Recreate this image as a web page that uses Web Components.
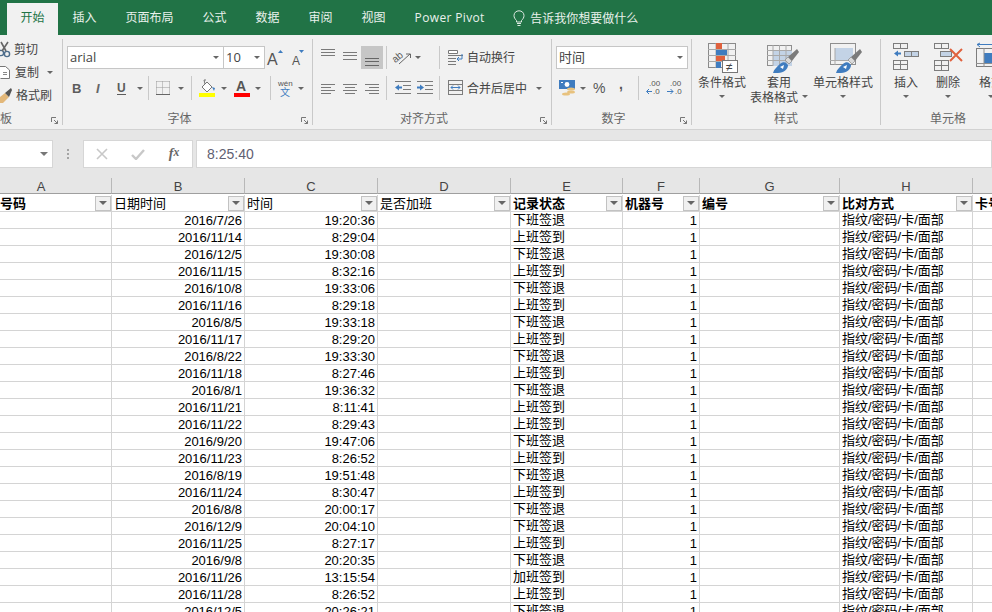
<!DOCTYPE html>
<html>
<head>
<meta charset="utf-8">
<style>
  html, body { margin: 0; padding: 0; width: 992px; height: 612px; overflow: hidden; background: #e6e6e6; }
  body { font: 12px "Liberation Sans", "Noto Sans CJK SC", sans-serif; display: flex; flex-direction: column; }
</style>
</head>
<body>
<xl-tabs></xl-tabs>
<xl-ribbon>
  <xl-group w="63" pt="0" launcher label="板" left>
    <xl-row h="23" top="-1"><xl-tool w="62" text="剪切" icon="cut"></xl-tool></xl-row>
    <xl-row h="23"><xl-tool w="46" text="复制" icon="copy"></xl-tool><xl-caret w="8" ></xl-caret></xl-row>
    <xl-row h="23"><xl-tool w="62" text="格式刷" icon="brush"></xl-tool></xl-row>
  </xl-group>

  <xl-group w="250" launcher label="字体">
    <xl-row pad="4" h="23">
      <xl-combo w="157" value="arial"></xl-combo>
      <xl-combo w="42" value="10"></xl-combo>
      <xl-tool w="22" icon="growfont"></xl-tool>
      <xl-tool w="22" icon="shrinkfont"></xl-tool>
    </xl-row>
    <xl-row pad="3" h="24" top="7">
      <xl-tool w="22" icon="bold"></xl-tool>
      <xl-tool w="22" icon="italic"></xl-tool>
      <xl-tool w="24" icon="underline"></xl-tool>
      <xl-caret w="12"></xl-caret>
      <xl-sep w="6"></xl-sep>
      <xl-tool w="22" icon="borders"></xl-tool>
      <xl-caret w="14"></xl-caret>
      <xl-sep w="8"></xl-sep>
      <xl-tool w="22" icon="fill"></xl-tool>
      <xl-caret w="12"></xl-caret>
      <xl-tool w="23" icon="fontcolor"></xl-tool>
      <xl-caret w="10"></xl-caret>
      <xl-sep w="12"></xl-sep>
      <xl-tool w="20" icon="pinyin"></xl-tool>
      <xl-caret w="12"></xl-caret>
    </xl-row>
  </xl-group>

  <xl-group w="239" launcher label="对齐方式">
    <xl-row pad="4" h="23">
      <xl-tool w="22" icon="atop"></xl-tool>
      <xl-tool w="22" icon="amiddle"></xl-tool>
      <xl-tool w="22" icon="abottom" on></xl-tool>
      <xl-sep w="8"></xl-sep>
      <xl-tool w="23" icon="orient"></xl-tool>
      <xl-caret w="7"></xl-caret>
      <xl-sep w="23"></xl-sep>
      <xl-tool pad icon="wrap" text="自动换行"></xl-tool>
    </xl-row>
    <xl-row pad="4" h="24" top="7">
      <xl-tool w="22" icon="aleft"></xl-tool>
      <xl-tool w="22" icon="acenter"></xl-tool>
      <xl-tool w="22" icon="aright"></xl-tool>
      <xl-sep w="8"></xl-sep>
      <xl-tool w="23" icon="outdent"></xl-tool>
      <xl-tool w="22" icon="indent"></xl-tool>
      <xl-sep w="8"></xl-sep>
      <xl-tool pad icon="merge" text="合并后居中"></xl-tool>
      <xl-caret w="24"></xl-caret>
    </xl-row>
  </xl-group>

  <xl-group w="140" launcher label="数字">
    <xl-row pad="4" h="23"><xl-combo w="132" value="时间"></xl-combo></xl-row>
    <xl-row pad="4" h="24" top="7">
      <xl-tool w="22" icon="money"></xl-tool>
      <xl-caret w="10"></xl-caret>
      <xl-tool w="24" icon="percent"></xl-tool>
      <xl-tool w="20" icon="comma"></xl-tool>
      <xl-sep w="11"></xl-sep>
      <xl-tool w="21" icon="decinc"></xl-tool>
      <xl-tool w="22" icon="decdec"></xl-tool>
    </xl-row>
  </xl-group>

  <xl-group w="189" label="样式" pt="4">
    <xl-row pad="5" big>
      <xl-bigtool w="50" icon="cond" lines="条件格式"></xl-bigtool>
      <xl-bigtool w="64" icon="table" lines="套用|表格格式" inlinecaret></xl-bigtool>
      <xl-bigtool w="64" icon="cellstyle" lines="单元格样式"></xl-bigtool>
    </xl-row>
  </xl-group>

  <xl-group w="134" label="单元格" pt="4" last>
    <xl-row pad="4" big>
      <xl-bigtool w="42" icon="insert" lines="插入"></xl-bigtool>
      <xl-bigtool w="42" icon="delete" lines="删除"></xl-bigtool>
      <xl-bigtool w="44" icon="format" lines="格式"></xl-bigtool>
    </xl-row>
  </xl-group>
</xl-ribbon>
<xl-formula value="8:25:40"></xl-formula>
<xl-sheet></xl-sheet>

<script>
// every icon is drawn 1:1, so viewBox units are screen pixels
const G = "#6f6f6f", B = "#3f7cbf", LB = "#c3d3e6";
const hl = (x, y, w, c = "#7a7a7a") => `<rect x="${x}" y="${y}" width="${w}" height="1" fill="${c}"/>`;
const box = (x, y, w, h, c = "#7d7d7d", f = "none") => `<rect x="${x + .5}" y="${y + .5}" width="${w - 1}" height="${h - 1}" fill="${f}" stroke="${c}"/>`;
const txt = (x, y, s, t, extra = "") => `<text x="${x}" y="${y}" font-size="${s}" font-family="Liberation Sans, Noto Sans CJK SC, sans-serif" ${extra}>${t}</text>`;
const brushTail = `
  <path d="M21 14 L30 6 L32 9 L25 18 Z" fill="#7b7b7b"/><path d="M18 17 L21 14 L25 18 L22 21 Z" fill="#d9d9d9" stroke="#7b7b7b" stroke-width=".6"/>
  <path d="M6 30 C7 26 10 24 13 21 C15 19 18 19 19 20 L21 22 C21 26 17 30 11 30 Z" fill="${B}"/><path d="M13 24 L17 22 L16 26 Z" fill="#fff"/>`;

const ICONS = {
  cut: [10, 15, `<circle cx="1" cy="11" r="2.6" fill="none" stroke="#4d6d8c" stroke-width="1.4"/><circle cx="7" cy="12" r="2.6" fill="none" stroke="#4d6d8c" stroke-width="1.4"/><path d="M1 0 L6 9 M8 0 L2 9" stroke="#666" stroke-width="1.6"/>`],
  copy: [11, 15, `<path d="M-2 1.5 H5.5 L9.5 5 V13.5 H0.5" fill="#fff" stroke="#777"/><path d="M3 7.5H7 M3 9.5H7" stroke="#888"/>`],
  brush: [12, 15, `<path d="M0 9 L5 5 L9 9 L3 15 H0 Z" fill="#e3b87a"/><path d="M5 5 L11 0 L12 2 L9 9 Z" fill="#555"/>`],
  growfont: [18, 16, txt(1, 15, 16, "A", `fill="#555"`) + `<path d="M12 3 L14.5 0 L17 3 Z" fill="${B}"/>`],
  shrinkfont: [18, 16, txt(4, 15, 12, "A", `fill="#555"`) + `<path d="M11 0 H16 L13.5 3 Z" fill="${B}"/>`],
  bold: [12, 16, txt(1, 13, 13, "B", `fill="#5c5c5c" font-weight="bold"`)],
  italic: [12, 16, txt(3, 13, 13, "I", `fill="#666" font-style="italic" font-family="Liberation Serif, serif" font-weight="bold"`)],
  underline: [12, 16, txt(1, 12, 12, "U", `fill="#5c5c5c" font-weight="bold"`) + hl(1, 14, 9, "#5c5c5c")],
  borders: [14, 14, `<path d="M.5 .5H13.5M.5 6.5H13.5M.5 .5V13.5M6.5 .5V13.5M13.5 .5V13.5" stroke="#999" stroke-dasharray="1 1" fill="none"/>` + hl(0, 13, 14, "#666")],
  fill: [17, 18, `<path d="M3 8 L8 3 L13 8 L8 13 Z" fill="#fff" stroke="#777"/><path d="M6 5 L5 1 H7" stroke="#777" fill="none"/><path d="M13 8 L16 9 L15 12 Z" fill="${B}"/><rect y="14" x="0" width="16" height="4" fill="#ffff00"/>`],
  fontcolor: [16, 18, txt(2, 12, 14, "A", `fill="#555" font-weight="bold"`) + `<rect x="0" y="14" width="16" height="4" fill="#ff0000"/>`],
  pinyin: [14, 18, txt(0, 7, 8, "wén", `fill="#555"`) + txt(2, 17, 10, "文", `fill="${B}"`)],
  atop: [14, 15, hl(0, -1, 14) + hl(0, 2, 14) + hl(0, 5, 14)],
  amiddle: [14, 15, hl(0, 2, 14) + hl(0, 5, 14) + hl(0, 9, 14)],
  abottom: [14, 15, hl(0, 8, 14, "#666") + hl(0, 11, 14, "#666") + hl(0, 15, 14, "#666")],
  aleft: [14, 14, hl(0, 3, 14) + hl(0, 6, 10) + hl(0, 9, 14) + hl(0, 12, 10)],
  acenter: [14, 14, hl(0, 3, 14) + hl(2, 6, 10) + hl(0, 9, 14) + hl(2, 12, 10)],
  aright: [14, 14, hl(0, 3, 14) + hl(4, 6, 10) + hl(0, 9, 14) + hl(4, 12, 10)],
  orient: [17, 15, txt(0, 10, 10, "ab", `fill="#555" transform="rotate(-40 5 10)"`) + `<path d="M5 14 L16 4 M12 4 H16.5 V8" stroke="#666" fill="none"/>`],
  wrap: [15, 15, `<path d="M.5 .5H9.5V3.5H.5Z" fill="#fff" stroke="#777"/>` + hl(0, 5, 15) + hl(0, 8, 8) + hl(0, 11, 8) + hl(0, 14, 8) + `<path d="M14 4 V9 H9 M11 7 L9 9 L11 11" stroke="${B}" fill="none"/>`],
  merge: [15, 16, box(0, 0, 15, 15) + hl(0, 4, 15) + hl(0, 10, 15) + `<path d="M3 7.5H12 M5 5.5L3 7.5L5 9.5 M10 5.5L12 7.5L10 9.5" stroke="${B}" fill="none"/>`],
  outdent: [16, 14, hl(0, 0, 16) + hl(8, 4, 8) + hl(8, 8, 8) + hl(0, 12, 16) + `<path d="M0 6.5 L4 3.5 V5.5 H7 V7.5 H4 V9.5 Z" fill="${B}"/>`],
  indent: [16, 14, hl(0, 0, 16) + hl(8, 4, 8) + hl(8, 8, 8) + hl(0, 12, 16) + `<path d="M7 6.5 L3 3.5 V5.5 H0 V7.5 H3 V9.5 Z" fill="${B}"/>`],
  money: [17, 16, `<rect x="0" y="0" width="16" height="9" fill="${B}"/><circle cx="8" cy="4.5" r="2.4" fill="#fff"/><rect x="2" y="2" width="2" height="1" fill="#fff"/><ellipse cx="12" cy="9" rx="4" ry="1.6" fill="#e8c27e"/><ellipse cx="12" cy="12" rx="4" ry="1.6" fill="#e8c27e"/><ellipse cx="7" cy="14" rx="4" ry="1.6" fill="#e8c27e"/>`],
  percent: [14, 16, txt(0, 13, 14, "%", `fill="#555"`)],
  comma: [8, 16, txt(1, 9, 14, ",", `fill="#555" font-weight="bold"`)],
  decinc: [16, 16, `<path d="M0 12.5H5 M3 10L5.5 12.5L3 15" stroke="${B}" fill="none" transform="translate(0 -1) scale(-1 1) translate(-6 0)"/>` + txt(7, 14, 8, ".0", `fill="#555"`) + txt(3, 6, 8, ".00", `fill="#555"`)],
  decdec: [16, 16, `<path d="M0 12.5H6 M3.5 10L6 12.5L3.5 15" stroke="${B}" fill="none" transform="translate(0 -1)"/>` + txt(8, 14, 8, ".0", `fill="#555"`) + txt(3, 6, 8, ".00", `fill="#555"`)],
  cond: [28, 30, box(0, 0, 28, 25, "#8a8a8a") + `<path d="M8 0V25 M20 0V25 M0 6.5H28 M0 12.5H28 M0 18.5H28" stroke="#a8a8a8"/>
    <rect x="8" y="0" width="6" height="6" fill="#e0613d"/><rect x="8" y="7" width="11" height="5" fill="${B}"/><rect x="8" y="13" width="9" height="5" fill="#e0613d"/><rect x="8" y="19" width="5" height="6" fill="${B}"/>
    <rect x="14.5" y="17.5" width="15" height="12" fill="#fff" stroke="#777"/>` + txt(18, 28, 12, "≠", `fill="#444"`)],
  table: [24, 30, box(0, 2, 25, 21, "#8f8f8f") + `<rect x="6" y="7" width="19" height="16" fill="${LB}"/><path d="M6 2V23 M12.5 2V23 M19 2V23 M0 7.5H25 M0 12.5H25 M0 17.5H25" stroke="#a9a9a9"/>` + brushTail],
  cellstyle: [26, 30, box(0, 0, 26, 22, "#8f8f8f") + `<rect x="5" y="5" width="18" height="12" fill="${LB}"/><path d="M0 17.5H23 M5 5V22" stroke="#a9a9a9"/>` + brushTail],
  insert: [26, 27, box(0, 0, 15, 6) + `<path d="M7.5 0V6" stroke="#7d7d7d"/>` + `<path d="M1 10.5 L5 7.5 V9.5 H8 V11.5 H5 V13.5 Z" fill="${B}"/>` + box(11, 8, 15, 6, "#7d7d7d", LB) + `<path d="M18.5 8V14" stroke="#7d7d7d"/>` + box(0, 17, 15, 10) + `<path d="M7.5 17V27 M0 21.5H15" stroke="#7d7d7d"/>`],
  delete: [28, 28, box(0, 0, 15, 6) + `<path d="M7.5 0V6" stroke="#7d7d7d"/>` + box(6, 8, 12, 6, "#7d7d7d", LB) + box(0, 17, 15, 11) + `<path d="M7.5 17V28 M0 22.5H15" stroke="#7d7d7d"/><path d="M16 6 L28 18 M28 6 L16 18" stroke="#e0613d" stroke-width="2"/>`],
  format: [30, 30, `<path d="M1 1.5H16 M4 0L1 1.5L4 4" stroke="${B}" fill="none"/>` + box(0, 5, 27, 19) + `<rect x="8" y="10" width="19" height="10" fill="${B}"/><path d="M0 20.5H27 M8 5V24" stroke="#8f8f8f"/>`],
  bulb: [12, 16, `<path d="M3.5 10.5 C2 9 1 7.5 1 5.5 C1 2.8 3.2 .8 6 .8 C8.8 .8 11 2.8 11 5.5 C11 7.5 10 9 8.5 10.5 V12 H3.5 Z" fill="none" stroke="#dfeae3"/><path d="M4 13.5H8 M4.5 15.5H7.5" stroke="#dfeae3"/>`]
};

class XlIcon extends HTMLElement {
  connectedCallback() {
    const [w, h, body] = ICONS[this.getAttribute("name")];
    this.attachShadow({ mode: "open" }).innerHTML = `
      <style>:host { display: block; flex: none; width: ${w}px; height: ${h}px; } svg { display: block; overflow: visible; }</style>
      <svg width="${w}" height="${h}" viewBox="0 0 ${w} ${h}">${body}</svg>`;
  }
}

class XlTabs extends HTMLElement {
  connectedCallback() {
    const tabs = ["开始", "插入", "页面布局", "公式", "数据", "审阅", "视图", "Power Pivot"];
    this.attachShadow({ mode: "open" }).innerHTML = `
      <style>
        :host { display: flex; flex: none; height: 35px; background: #217346; color: #e9f1ec; padding-left: 7px;
          font: 12px "Open Sans", "Noto Sans CJK SC", sans-serif; align-items: stretch; }
        .tab { padding: 0 14.5px; line-height: 35px; white-space: nowrap; }
        .tab.on { background: #f1f1f1; color: #217346; margin-top: 3px; line-height: 30px; padding: 0 13.5px; }
        .pp { letter-spacing: .35px; }
        .tell { display: flex; align-items: center; gap: 5px; margin-left: 14px; }
      </style>
      ${tabs.map((t, i) => `<div class="tab ${i ? "" : "on"} ${i == 7 ? "pp" : ""}">${t}</div>`).join("")}
      <div class="tell"><xl-icon name="bulb"></xl-icon><span>告诉我你想要做什么</span></div>`;
  }
}

class XlRibbon extends HTMLElement {
  constructor() {
    super();
    this.attachShadow({ mode: "open" }).innerHTML = `
      <style>
        :host { display: flex; flex: none; box-sizing: border-box; height: 95px; background: #f1f1f1; overflow: hidden;
          border-bottom: 1px solid #d2d2d2; color: #444; font: 12px "Noto Sans CJK SC", sans-serif; }
      </style><slot></slot>`;
  }
}

class XlGroup extends HTMLElement {
  connectedCallback() {
    const last = this.hasAttribute("last");
    const launcher = this.hasAttribute("launcher");
    const pad = this.getAttribute("pt") || 7;
    this.attachShadow({ mode: "open" }).innerHTML = `
      <style>
        :host { display: flex; flex-direction: column; flex: none; position: relative; box-sizing: border-box;
          width: ${this.getAttribute("w")}px; height: 86px; margin-top: 4px; padding-top: ${pad}px;
          ${last ? "" : "border-right: 1px solid #c9c9c9;"} }
        .body { flex: 1; min-height: 0; }
        .label { height: 14px; line-height: 14px; color: #666; white-space: nowrap;
          text-align: ${this.hasAttribute("left") ? "left" : "center"};
          padding-right: ${launcher && !this.hasAttribute("left") ? 16 : 0}px; }
        .launch { position: absolute; right: 4px; bottom: 1px; width: 7px; height: 7px; }
      </style>
      <div class="body"><slot></slot></div>
      <div class="label">${this.getAttribute("label")}</div>
      ${launcher ? `<svg class="launch" viewBox="0 0 7 7"><path d="M.5 5V.5H5 M3 3L6.5 6.5 M6.5 3.5V6.5H3.5" fill="none" stroke="#777"/></svg>` : ""}`;
  }
}

class XlRow extends HTMLElement {
  connectedCallback() {
    const h = this.getAttribute("h");
    this.attachShadow({ mode: "open" }).innerHTML = `
      <style>
        :host { display: flex; align-items: ${this.hasAttribute("big") ? "flex-start" : "center"};
          ${h ? `height: ${h}px;` : ""} margin-top: ${this.getAttribute("top") || 0}px;
          padding-left: ${this.getAttribute("pad") || 0}px; }
      </style><slot></slot>`;
  }
}

class XlTool extends HTMLElement {
  connectedCallback() {
    const w = this.getAttribute("w"), text = this.getAttribute("text");
    const pad = this.hasAttribute("pad");
    this.attachShadow({ mode: "open" }).innerHTML = `
      <style>
        :host { display: flex; flex: none; align-items: center; height: 100%; gap: 4px; white-space: nowrap;
          justify-content: ${text ? "flex-start" : "center"};
          ${w ? `width: ${w}px;` : ""} ${pad ? "padding-left: 4px;" : ""}
          ${this.hasAttribute("on") ? "background: #c6c6c6;" : ""} }
        span { margin-bottom: 2px; }
      </style>
      <xl-icon name="${this.getAttribute("icon")}"></xl-icon>${text ? `<span>${text}</span>` : ""}`;
  }
}

class XlCaret extends HTMLElement {
  connectedCallback() {
    this.attachShadow({ mode: "open" }).innerHTML = `
      <style>
        :host { display: flex; flex: none; align-items: center; justify-content: center; height: 100%; width: ${this.getAttribute("w")}px; }
        i { width: 0; height: 0; border: 3px solid transparent; border-top: 3px solid #666; border-bottom: 0; }
      </style><i></i>`;
  }
}

class XlSep extends HTMLElement {
  connectedCallback() {
    const w = +this.getAttribute("w");
    this.attachShadow({ mode: "open" }).innerHTML = `
      <style>
        :host { display: flex; flex: none; justify-content: flex-end; height: 100%; width: ${w}px; }
        i { width: 1px; height: 100%; background: #c9c9c9; margin-right: ${Math.min(4, w / 2)}px; }
      </style><i></i>`;
  }
}

class XlCombo extends HTMLElement {
  connectedCallback() {
    this.attachShadow({ mode: "open" }).innerHTML = `
      <style>
        :host { display: flex; flex: none; box-sizing: border-box; align-items: center; height: 23px; width: ${this.getAttribute("w")}px;
          background: #fff; border: 1px solid #c6c6c6; padding-left: 2px; margin-right: -1px; color: #444;
          font: 13px "Open Sans", "Noto Sans CJK SC", sans-serif; }
        span { flex: 1; margin-bottom: 2px; }
        i { width: 0; height: 0; border: 3px solid transparent; border-top: 3px solid #666; border-bottom: 0; margin-right: 4px; }
      </style><span>${this.getAttribute("value")}</span><i></i>`;
  }
}

class XlBigtool extends HTMLElement {
  connectedCallback() {
    const lines = this.getAttribute("lines").split("|");
    const caret = `<i></i>`;
    const inline = this.hasAttribute("inlinecaret");
    this.attachShadow({ mode: "open" }).innerHTML = `
      <style>
        :host { display: flex; flex: none; flex-direction: column; align-items: center; width: ${this.getAttribute("w")}px; white-space: nowrap; }
        .pic { height: 30px; width: 100%; display: flex; justify-content: center; margin-bottom: 1px; }
        .line { height: 15px; line-height: 15px; display: flex; align-items: center; gap: 4px; }
        i { width: 0; height: 0; border: 3px solid transparent; border-top: 3px solid #666; border-bottom: 0; }
      </style>
      <div class="pic"><xl-icon name="${this.getAttribute("icon")}"></xl-icon></div>
      ${lines.map((l, n) => `<div class="line"><span>${l}</span>${inline && n == lines.length - 1 ? caret : ""}</div>`).join("")}
      ${inline ? "" : `<div class="line">${caret}</div>`}`;
  }
}

class XlFormula extends HTMLElement {
  connectedCallback() {
    this.attachShadow({ mode: "open" }).innerHTML = `
      <style>
        :host { display: flex; flex: none; height: 48px; box-sizing: border-box; padding-top: 10px; background: #e6e6e6; font: 14px "Liberation Sans", sans-serif; }
        .field { display: flex; align-items: center; box-sizing: border-box; height: 28px; background: #fff; border: 1px solid #d6d6d6; }
        .name { width: 53px; justify-content: flex-end; border-left: 0; padding-right: 4px; }
        .name i { width: 0; height: 0; border: 4px solid transparent; border-top: 4px solid #777; border-bottom: 0; }
        .grip { width: 30px; display: flex; flex-direction: column; align-items: center; justify-content: center; gap: 2px; height: 28px; }
        .grip b { width: 2px; height: 2px; background: #a4a4a4; }
        .btns { width: 110px; margin-right: 3px; }
        .btns span { flex: 1; display: flex; justify-content: center; }
        .fx { font: italic bold 14px "Liberation Serif", serif; color: #666; }
        .input { flex: 1; padding-left: 10px; color: #5f6072; }
      </style>
      <div class="field name"><i></i></div>
      <div class="grip"><b></b><b></b><b></b></div>
      <div class="field btns">
        <span><svg width="12" height="12" viewBox="0 0 12 12"><path d="M1 1L11 11M11 1L1 11" stroke="#c8c8c8" stroke-width="1.6"/></svg></span>
        <span><svg width="14" height="12" viewBox="0 0 14 12"><path d="M1 7L5 11L13 2" fill="none" stroke="#c8c8c8" stroke-width="2.4"/></svg></span>
        <span class="fx">f<small>x</small></span>
      </div>
      <div class="field input">${this.getAttribute("value")}</div>`;
  }
}

class XlSheet extends HTMLElement {
  connectedCallback() {
    const widths = [112, 133, 133, 133, 112, 77, 140, 133, 120];
    const heads = [["号码", 1, 1], ["日期时间", 0, 1], ["时间", 0, 1], ["是否加班", 0, 1], ["记录状态", 1, 1], ["机器号", 1, 1], ["编号", 1, 1], ["比对方式", 1, 1], ["卡号", 1, 0]];
    const rows = `2016/7/26 19:20:36 下|2016/11/14 8:29:04 上|2016/12/5 19:30:08 下|2016/11/15 8:32:16 上|2016/10/8 19:33:06 下|2016/11/16 8:29:18 上|2016/8/5 19:33:18 下|2016/11/17 8:29:20 上|2016/8/22 19:33:30 下|2016/11/18 8:27:46 上|2016/8/1 19:36:32 下|2016/11/21 8:11:41 上|2016/11/22 8:29:43 上|2016/9/20 19:47:06 下|2016/11/23 8:26:52 上|2016/8/19 19:51:48 下|2016/11/24 8:30:47 上|2016/8/8 20:00:17 下|2016/12/9 20:04:10 下|2016/11/25 8:27:17 上|2016/9/8 20:20:35 下|2016/11/26 13:15:54 加|2016/11/28 8:26:52 上|2016/12/5 20:26:21 下`.split("|");
    const status = { "上": "上班签到", "下": "下班签退", "加": "加班签到" };
    let html = "ABCDEFGHI".split("").map((c, i) => `<div class="col ${i ? "" : "first"}">${c == "I" ? "" : c}</div>`).join("");
    html += heads.map(([t, bold, filter], i) => `<div class="cell head ${bold ? "b" : ""} ${i ? "" : "h0"}"><span>${t}</span>${filter ? `<em><i></i></em>` : ""}</div>`).join("");
    for (const r of rows) {
      const [d, t, s] = r.split(" ");
      html += `<div class="cell"></div><div class="cell r">${d}</div><div class="cell r">${t}</div><div class="cell"></div><div class="cell c">${status[s]}</div><div class="cell r">1</div><div class="cell"></div><div class="cell c">指纹/密码/卡/面部</div><div class="cell"></div>`;
    }
    this.attachShadow({ mode: "open" }).innerHTML = `
      <style>
        :host { display: block; flex: 1; min-height: 0; overflow: hidden; background: #fff; color: #000;
          font: 13px "Liberation Sans", "Noto Sans CJK SC", sans-serif; }
        .grid { display: grid; grid-template-columns: ${widths.map(w => w + "px").join(" ")}; grid-auto-rows: 17px; width: 992px; overflow: hidden; }
        .col { height: 16px; margin-bottom: 1px; box-sizing: border-box; background: #e6e6e6; color: #444; text-align: center; line-height: 17px;
          border-right: 1px solid #b8b8b8; border-bottom: 1px solid #9f9f9f; }
        .col.first { padding-right: 29px; }
        .cell { box-sizing: border-box; height: 17px; line-height: 17px; padding: 0 2px 0 2px; border-right: 1px solid #d4d4d4; border-bottom: 1px solid #d4d4d4; white-space: nowrap; overflow: hidden; }
        .c { line-height: 15px; }
        .r { text-align: right; }
        .head { display: flex; justify-content: space-between; align-items: center; padding: 0 0 0 2px; }
        .head.h0 { padding-left: 0; }
        .head span { flex: none; }
        .head.b { font-weight: bold; }
        .head em { display: flex; align-items: center; justify-content: center; flex: none; width: 16px; height: 15px; box-sizing: border-box; background: #f0f0f0; border: 1px solid #c2c2c2; }
        .head i { width: 0; height: 0; border: 4px solid transparent; border-top: 4px solid #666; border-bottom: 0; }
      </style>
      <div class="grid">${html}</div>`;
  }
}

customElements.define("xl-icon", XlIcon);
customElements.define("xl-tabs", XlTabs);
customElements.define("xl-ribbon", XlRibbon);
customElements.define("xl-group", XlGroup);
customElements.define("xl-row", XlRow);
customElements.define("xl-tool", XlTool);
customElements.define("xl-caret", XlCaret);
customElements.define("xl-sep", XlSep);
customElements.define("xl-combo", XlCombo);
customElements.define("xl-bigtool", XlBigtool);
customElements.define("xl-formula", XlFormula);
customElements.define("xl-sheet", XlSheet);
</script>
</body>
</html>
